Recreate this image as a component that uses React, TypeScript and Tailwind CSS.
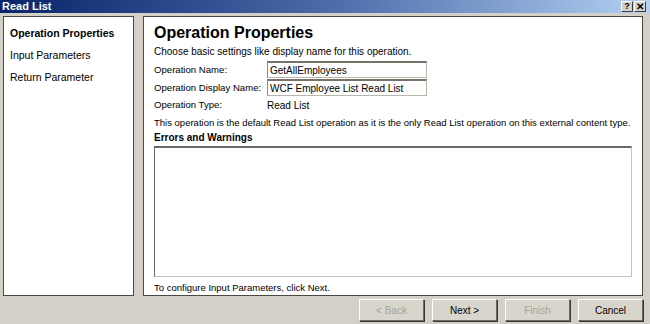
import React from 'react';

const font = { fontFamily: '"Liberation Sans", Arial, sans-serif' };

const NavItem = ({ label, active }: { label: string; active?: boolean }) => (
    <div className={`h-[22px] flex items-center pl-[6px] text-[10.5px] text-black ${active ? 'font-bold' : ''}`}>
        {label}
    </div>
);

const Field = ({ label, value }: { label: string; value: string }) => (
    <div className="flex items-center h-[18px]">
        <div className="w-[113px] text-[9.6px]">{label}</div>
        <div className="w-[160px] h-[17px] bg-white border border-[#b9b6ad] border-t-2 border-t-[#77736b] border-l-[#8d8a82] flex items-center px-[2px] text-[10px]">
            {value}
        </div>
    </div>
);

const Btn = ({ label, disabled }: { label: string; disabled?: boolean }) => (
    <div
        className={`w-[65px] h-[22px] flex items-center justify-center text-[10px] border border-t-white border-l-white border-b-[#6d6a63] border-r-[#6d6a63] bg-[#d8d5cd] shadow-[1px_1px_0_#3a3833] ${disabled ? 'text-[#a7a49c]' : 'text-black'}`}
    >
        {label}
    </div>
);

export default function App() {
    return (
        <div className="w-[650px] h-[324px] bg-[#d4d0c8] flex flex-col overflow-hidden text-black" style={font}>
            {/* title bar */}
            <div className="h-[13px] flex items-center justify-between bg-gradient-to-r from-[#0a246a] via-[#4a6aa8] to-[#b4d0f2]">
                <span className="pl-[2px] text-[11px] font-bold text-white leading-none">Read List</span>
                <div className="flex gap-[1px] pr-[4px]">
                    <div className="w-[12px] h-[11px] bg-[#d4d0c8] border border-t-white border-l-white border-b-[#404040] border-r-[#404040] flex items-center justify-center text-[9px] font-bold leading-none">?</div>
                    <div className="w-[12px] h-[11px] bg-[#d4d0c8] border border-t-white border-l-white border-b-[#404040] border-r-[#404040] flex items-center justify-center text-[10px] font-bold leading-none">✕</div>
                </div>
            </div>

            <div className="flex gap-[9px] pl-[3px] pr-[7px] pt-[3px] h-[283px]">
                {/* left nav */}
                <div className="w-[131px] bg-white border border-[#4a4843] pt-[6px]">
                    <NavItem label="Operation Properties" active />
                    <NavItem label="Input Parameters" />
                    <NavItem label="Return Parameter" />
                </div>

                {/* main panel */}
                <div className="flex-1 bg-white border border-[#4a4843] pl-[10px] pr-[10px] pt-[7px] flex flex-col">
                    <div className="text-[16px] font-bold leading-[18px]">Operation Properties</div>
                    <div className="text-[10px] mt-[2px] mb-[2px]">Choose basic settings like display name for this operation.</div>
                    <Field label="Operation Name:" value="GetAllEmployees" />
                    <Field label="Operation Display Name:" value="WCF Employee List Read List" />
                    <div className="flex items-center h-[17px] text-[10px]">
                        <div className="w-[113px] text-[9.6px]">Operation Type:</div>
                        <div>Read List</div>
                    </div>
                    <div className="text-[9.5px] mt-[1px] h-[16px] flex items-center whitespace-nowrap">
                        This operation is the default Read List operation as it is the only Read List operation on this external content type.
                    </div>
                    <div className="text-[10px] font-bold h-[13px] flex items-center">Errors and Warnings</div>
                    <div className="h-[131px] mt-[2px] bg-white border border-[#c5c2bb] border-t-2 border-t-[#6c6963] border-l-[#6c6963]" />
                    <div className="text-[9.5px] mt-[4px]">To configure Input Parameters, click Next.</div>
                </div>
            </div>

            {/* buttons */}
            <div className="flex justify-end gap-[8px] pr-[7px] pt-[3px]">
                <Btn label="< Back" disabled />
                <Btn label="Next >" />
                <Btn label="Finish" disabled />
                <Btn label="Cancel" />
            </div>
        </div>
    );
}
